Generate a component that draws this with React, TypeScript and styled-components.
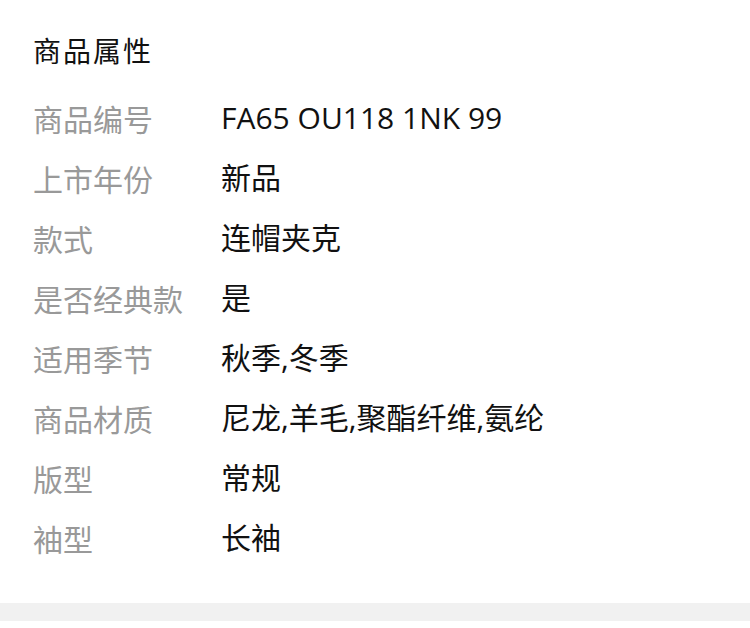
import React from "react";
import styled, { createGlobalStyle } from "styled-components";

const Global = createGlobalStyle`
  html, body { margin: 0; padding: 0; background: #fff; }
  body { font-family: "Noto Sans CJK SC", "Noto Sans", sans-serif; }
`;

const Page = styled.div`
  width: 750px;
  height: 628px;
  display: flex;
  flex-direction: column;
  background: #fff;
`;

const Section = styled.section`
  padding: 30px 0 0 33px;
  height: 603px;
  box-sizing: border-box;
`;

const Title = styled.h2`
  margin: 0;
  height: 40px;
  line-height: 40px;
  font-size: 28px;
  font-weight: 400;
  color: #111;
  letter-spacing: 2px;
`;

const List = styled.dl`
  margin: 18px 0 0;
  display: grid;
  grid-template-columns: 188px 1fr;
  grid-auto-rows: 60px;
  align-items: center;
`;

const Label = styled.dt`
  font-size: 30px;
  color: #999;
  line-height: 60px;
  white-space: nowrap;
`;

const Value = styled.dd`
  margin: 0;
  font-family: "Open Sans", "Noto Sans CJK SC", sans-serif;
  font-size: 30px;
  color: #111;
  line-height: 60px;
  white-space: nowrap;
`;

const Footer = styled.div`
  height: 18px;
  background: #f1f1f1;
`;

const rows: [string, string][] = [
  ["商品编号", "FA65 OU118 1NK 99"],
  ["上市年份", "新品"],
  ["款式", "连帽夹克"],
  ["是否经典款", "是"],
  ["适用季节", "秋季,冬季"],
  ["商品材质", "尼龙,羊毛,聚酯纤维,氨纶"],
  ["版型", "常规"],
  ["袖型", "长袖"],
];

export default function App() {
  return (
    <Page>
      <Global />
      <Section>
        <Title>商品属性</Title>
        <List>
          {rows.map(([k, v]) => (
            <React.Fragment key={k}>
              <Label>{k}</Label>
              <Value>{v}</Value>
            </React.Fragment>
          ))}
        </List>
      </Section>
      <Footer />
    </Page>
  );
}
